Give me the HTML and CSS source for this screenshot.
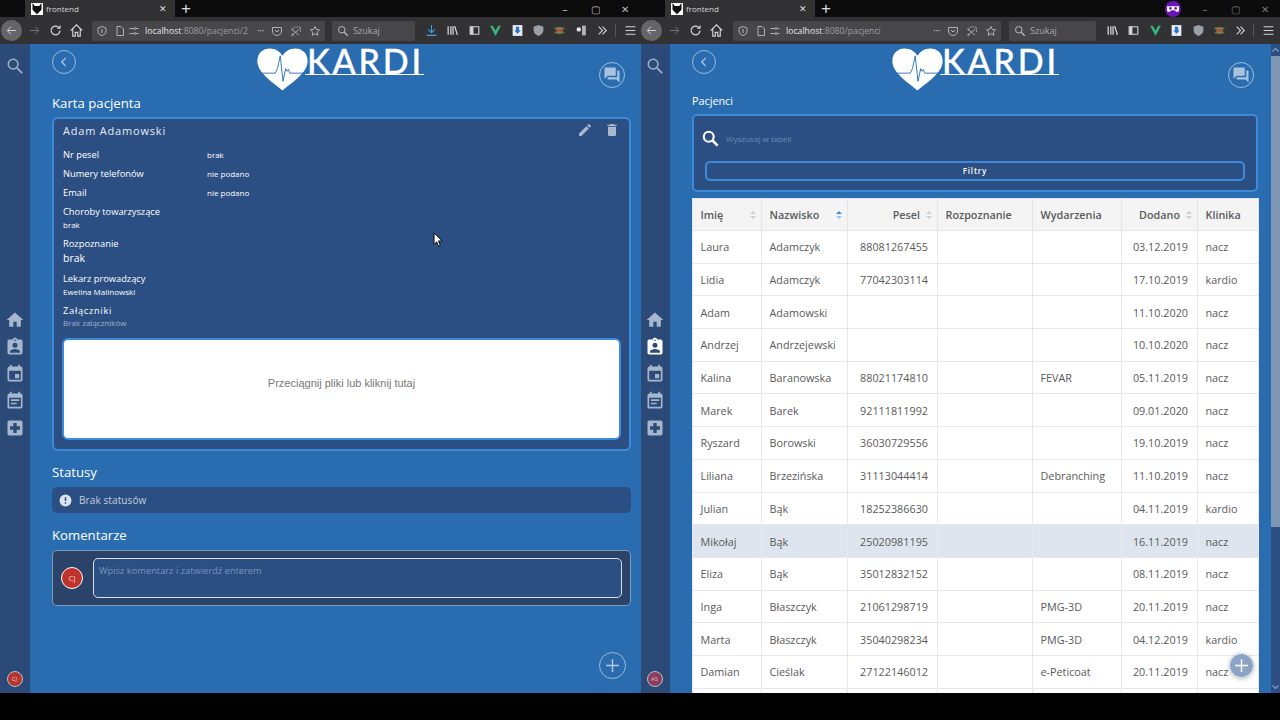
FILE: index.html
```html
<!DOCTYPE html>
<html lang="pl">

<head>
	<meta charset="utf-8">
	<meta name="viewport" content="width=device-width, initial-scale=1.0">
	<title>frontend</title>
	<link rel="stylesheet" href="styles.css">
</head>

<body>
	<svg class="defs" width="0" height="0">
		<symbol id="i-search" viewBox="0 0 24 24"><circle cx="9.5" cy="9.5" r="6.5" fill="none" stroke="currentColor" stroke-width="2"/><path d="M14.5 14.5l7 7" stroke="currentColor" stroke-width="2.4" fill="none"/></symbol>
		<symbol id="i-find" viewBox="0 0 24 24"><circle cx="9.5" cy="9.5" r="7" fill="none" stroke="currentColor" stroke-width="3"/><path d="M14.5 14.5l7.500 7.500" stroke="currentColor" stroke-width="3.600" fill="none"/></symbol>
		<symbol id="i-home" viewBox="0 0 24 24"><path fill="currentColor" d="M10 20v-6h4v6h5v-8h3L12 3 2 12h3v8z"/></symbol>
		<symbol id="i-badge" viewBox="0 0 24 24"><path fill="currentColor" d="M19 3h-4.200C14.400 1.800 13.300 1 12 1s-2.400.8-2.800 2H5a2 2 0 0 0-2 2v14a2 2 0 0 0 2 2h14a2 2 0 0 0 2-2V5a2 2 0 0 0-2-2zm-7 0a1 1 0 1 1 0 2 1 1 0 0 1 0-2zm0 4a3 3 0 1 1 0 6 3 3 0 0 1 0-6zm6 12H6v-1.400c0-2 4-3.100 6-3.100s6 1.100 6 3.100z"/></symbol>
		<symbol id="i-event" viewBox="0 0 24 24"><path fill="currentColor" d="M17 12h-5v5h5zM16 1v2H8V1H6v2H5a2 2 0 0 0-2 2v14a2 2 0 0 0 2 2h14a2 2 0 0 0 2-2V5a2 2 0 0 0-2-2h-1V1zm3 18H5V8h14z"/></symbol>
		<symbol id="i-note" viewBox="0 0 24 24"><path fill="currentColor" d="M17 10H7v2h10zm2-7h-1V1h-2v2H8V1H6v2H5a2 2 0 0 0-2 2v14a2 2 0 0 0 2 2h14a2 2 0 0 0 2-2V5a2 2 0 0 0-2-2zm0 16H5V8h14zm-5-5H7v2h7z"/></symbol>
		<symbol id="i-plus" viewBox="0 0 24 24"><path fill="currentColor" d="M19 3H5a2 2 0 0 0-2 2v14a2 2 0 0 0 2 2h14a2 2 0 0 0 2-2V5a2 2 0 0 0-2-2zm-1 11h-4v4h-4v-4H6v-4h4V6h4v4h4z"/></symbol>
		<symbol id="i-forum" viewBox="0 0 24 24"><path fill="currentColor" d="M21 6h-2v9H6v2c0 .6.4 1 1 1h11l4 4V7c0-.6-.4-1-1-1zm-4 6V3c0-.6-.4-1-1-1H3c-.6 0-1 .4-1 1v14l4-4h10c.6 0 1-.4 1-1z"/></symbol>
		<symbol id="i-heart" viewBox="0 0 56 46"><path fill="#fff" d="M28 46C20 39 2 28 .5 15.500-.5 6 6 0 14 0c6 0 11 3 14 8 3-5 8-8 14-8 8 0 14.500 6 13.500 15.500C54 28 36 39 28 46z"/><path fill="none" stroke="#2a6cb0" stroke-width="1" d="M1 27h19l2.500-5 3-14 3 28 3-14 1.500 3 1.500-2 1.500 4H55"/></symbol>
		<symbol id="i-back" viewBox="0 0 24 24"><path fill="none" stroke="currentColor" stroke-width="1.600" d="M19 12H6m5-6l-6 6 6 6"/></symbol>
		<symbol id="i-forward" viewBox="0 0 24 24"><path fill="none" stroke="currentColor" stroke-width="1.600" d="M5 12h13m-5-6l6 6-6 6"/></symbol>
		<symbol id="i-reload" viewBox="0 0 24 24"><path fill="none" stroke="currentColor" stroke-width="2" d="M19 12a7 7 0 1 1-2.500-5.400"/><path fill="currentColor" d="M20 3v6h-6z"/></symbol>
		<symbol id="i-house" viewBox="0 0 24 24"><path fill="none" stroke="currentColor" stroke-width="1.800" d="M3 12l9-9 9 9M6 10v11h4v-6h4v6h4V10"/></symbol>
		<symbol id="i-page" viewBox="0 0 24 24"><path fill="none" stroke="currentColor" stroke-width="1.800" d="M6 3h8l5 5v13H6z"/></symbol>
		<symbol id="i-sliders" viewBox="0 0 24 24"><path fill="none" stroke="currentColor" stroke-width="1.800" d="M3 7h9M3 17h9M16 7h5M16 17h5"/><circle cx="14" cy="7" r="2" fill="none" stroke="currentColor" stroke-width="1.500"/><circle cx="14" cy="17" r="2" fill="none" stroke="currentColor" stroke-width="1.500"/></symbol>
		<symbol id="i-shield" viewBox="0 0 24 24"><path fill="none" stroke="currentColor" stroke-width="1.800" d="M12 3l8 3v6c0 5-4 8-8 9-4-1-8-4-8-9V6z"/><path fill="currentColor" d="M11 8h2v8h-2z"/></symbol>
		<symbol id="i-pocket" viewBox="0 0 24 24"><path fill="none" stroke="currentColor" stroke-width="1.800" d="M3 5h18v7a9 9 0 0 1-18 0z"/><path fill="none" stroke="currentColor" stroke-width="2" d="M8 10l4 4 4-4"/></symbol>
		<symbol id="i-star" viewBox="0 0 24 24"><path fill="none" stroke="currentColor" stroke-width="1.800" d="M12 3l2.800 6 6.200.8-4.500 4.300 1.200 6.400L12 17.400l-5.700 3.100 1.200-6.400L3 9.800 9.200 9z"/></symbol>
		<symbol id="i-shot" viewBox="0 0 24 24"><path fill="none" stroke="currentColor" stroke-width="1.600" stroke-dasharray="3 2" d="M8 4h13v11"/><path fill="none" stroke="currentColor" stroke-width="1.600" d="M4 20L19 8M4 9l14 11"/><circle cx="5" cy="8" r="2" fill="none" stroke="currentColor"/><circle cx="5" cy="20" r="2" fill="none" stroke="currentColor"/></symbol>
		<symbol id="i-library" viewBox="0 0 24 24"><path fill="none" stroke="currentColor" stroke-width="2.400" d="M4 4v16M9 4v16M13 4v16M16 4l5 16"/></symbol>
		<symbol id="i-sidebar" viewBox="0 0 24 24"><path fill="none" stroke="currentColor" stroke-width="2" d="M4 5h16v14H4z"/><path fill="currentColor" d="M4 5h6v14H4z"/></symbol>
		<symbol id="i-more" viewBox="0 0 24 24"><path fill="none" stroke="currentColor" stroke-width="2" d="M5 5l7 7-7 7M12 5l7 7-7 7"/></symbol>
		<symbol id="i-menu" viewBox="0 0 24 24"><path fill="none" stroke="currentColor" stroke-width="2" d="M3 5h18M3 12h18M3 19h18"/></symbol>
		<symbol id="i-download" viewBox="0 0 24 24"><path fill="none" stroke="currentColor" stroke-width="2" d="M12 2v14m-6-6l6 6 6-6M3 21h18"/></symbol>
		<symbol id="i-vue" viewBox="0 0 24 24"><path fill="#35b37e" d="M2 3h5l5 9 5-9h5L12 22z"/></symbol>
		<symbol id="i-save" viewBox="0 0 24 24"><path fill="#e6ebf2" d="M3 2h18v20H3z"/><path fill="#2a74c8" d="M9 5h6v7h3l-6 6-6-6h3z"/></symbol>
		<symbol id="i-ublock" viewBox="0 0 24 24"><path fill="#98a1ab" d="M12 2l9 3v7c0 5-4 8-9 10-5-2-9-5-9-10V5z"/></symbol>
		<symbol id="i-bug" viewBox="0 0 24 24"><circle cx="12" cy="12" r="7" fill="#8c5a3c"/><circle cx="12" cy="12" r="3" fill="#c64a3d"/><path stroke="#5a9a50" stroke-width="2" d="M3 8h18M3 16h18"/></symbol>
		<symbol id="i-ext" viewBox="0 0 24 24"><circle cx="7" cy="10" r="4" fill="#e8e8e8"/><path fill="#b5b5b5" d="M13 3h7v18h-7z"/></symbol>
		<symbol id="i-mask" viewBox="0 0 24 24"><circle cx="12" cy="12" r="12" fill="#6a16b8"/><path fill="#fff" d="M3 8h18v6c0 3-5 3-6 0h-6c-1 3-6 3-6 0z"/><circle cx="8" cy="11" r="2" fill="#6a16b8"/><circle cx="16" cy="11" r="2" fill="#6a16b8"/></symbol>
		<symbol id="i-favicon" viewBox="0 0 16 16"><path fill="#fff" d="M0 0h16v16H0z"/><path fill="#111" d="M2 0l3 4h6l3-4v9l-6 6-6-6z"/></symbol>
		<symbol id="i-edit" viewBox="0 0 24 24"><path fill="currentColor" d="M3 17.200V21h3.800L17.800 9.900l-3.700-3.700zM20.700 7a1 1 0 0 0 0-1.400l-2.300-2.300a1 1 0 0 0-1.400 0l-1.800 1.800 3.700 3.700z"/></symbol>
		<symbol id="i-trash" viewBox="0 0 24 24"><path fill="currentColor" d="M6 19a2 2 0 0 0 2 2h8a2 2 0 0 0 2-2V7H6zM19 4h-3.500l-1-1h-5l-1 1H5v2h14z"/></symbol>
		<symbol id="i-alert" viewBox="0 0 24 24"><path fill="currentColor" d="M12 1a11 11 0 1 0 0 22 11 11 0 0 0 0-22zm1.500 17h-3v-3h3zm0-5h-3V6h3z"/></symbol>
		<symbol id="i-chev" viewBox="0 0 24 24"><path fill="none" stroke="currentColor" stroke-width="2" d="M15 5l-7 7 7 7"/></symbol>
		<symbol id="i-up" viewBox="0 0 24 24"><path fill="none" stroke="currentColor" stroke-width="3" d="M4 16l8-8 8 8"/></symbol>
		<symbol id="i-down" viewBox="0 0 24 24"><path fill="none" stroke="currentColor" stroke-width="3" d="M4 8l8 8 8-8"/></symbol>
		<symbol id="i-add" viewBox="0 0 24 24"><path fill="none" stroke="currentColor" stroke-width="2" d="M12 3v18M3 12h18"/></symbol>
		<symbol id="i-cursor" viewBox="0 0 12 18"><path fill="#fff" stroke="#000" stroke-width="1" d="M1 1v13l3-3 2 5 2-1-2-5h4z"/></symbol>
	</svg>

	<div class="screen">
		<section class="window">
			<div class="tabbar">
				<div class="tab"><svg class="favicon"><use href="#i-favicon"/></svg><span class="tab-title">frontend</span><span class="tab-close">✕</span></div>
				<span class="new-tab">+</span>
				<div class="win-controls"><span>–</span><span>▢</span><span>✕</span></div>
			</div>
			<div class="toolbar">
				<span class="back-btn"><svg class="ti"><use href="#i-back"/></svg></span>
				<svg class="ti dim"><use href="#i-forward"/></svg>
				<svg class="ti ml"><use href="#i-reload"/></svg>
				<svg class="ti ml"><use href="#i-house"/></svg>
				<div class="urlbar urlbar-l">
					<svg class="ti-s"><use href="#i-shield"/></svg>
					<svg class="ti-s sep"><use href="#i-page"/></svg>
					<svg class="ti-s sliders"><use href="#i-sliders"/></svg>
					<span class="url"><b>localhost</b>:8080/pacjenci/2</span>
					<span class="dots">•••</span>
					<svg class="ti-s"><use href="#i-pocket"/></svg>
					<svg class="ti-s"><use href="#i-shot"/></svg>
					<svg class="ti-s"><use href="#i-star"/></svg>
				</div>
				<div class="searchbar searchbar-l"><svg class="ti-s"><use href="#i-search"/></svg><span>Szukaj</span></div>
				<svg class="ext first blue"><use href="#i-download"/></svg>
				<svg class="ext"><use href="#i-library"/></svg>
				<svg class="ext"><use href="#i-sidebar"/></svg>
				<svg class="ext"><use href="#i-vue"/></svg>
				<svg class="ext"><use href="#i-save"/></svg>
				<svg class="ext"><use href="#i-ublock"/></svg>
				<svg class="ext"><use href="#i-bug"/></svg>
				<svg class="ext"><use href="#i-ext"/></svg>
				<svg class="ext"><use href="#i-more"/></svg>
				<svg class="ext menu"><use href="#i-menu"/></svg>
			</div>
			<div class="app">
				<aside class="sidebar">
					<svg class="side-search"><use href="#i-search"/></svg>
					<nav class="side-nav">
						<svg><use href="#i-home"/></svg>
						<svg><use href="#i-badge"/></svg>
						<svg><use href="#i-event"/></svg>
						<svg><use href="#i-note"/></svg>
						<svg><use href="#i-plus"/></svg>
					</nav>
					<span class="side-avatar cj">CJ</span>
				</aside>
				<main class="content card-page">
					<header class="top">
						<span class="round-btn"><svg><use href="#i-chev"/></svg></span>
						<div class="logo"><svg class="heart"><use href="#i-heart"/></svg><span class="logo-text">KARDI</span></div>
						<span class="round-btn big"><svg><use href="#i-forum"/></svg></span>
					</header>
					<h1 class="title">Karta pacjenta</h1>
					<div class="patient">
						<div class="patient-head">
							<h2>Adam Adamowski</h2>
							<svg><use href="#i-edit"/></svg>
							<svg><use href="#i-trash"/></svg>
						</div>
						<dl class="facts">
							<dt>Nr pesel</dt><dd>brak</dd>
							<dt>Numery telefonów</dt><dd>nie podano</dd>
							<dt>Email</dt><dd>nie podano</dd>
						</dl>
						<div class="block"><h3>Choroby towarzyszące</h3><p>brak</p></div>
						<div class="block"><h3>Rozpoznanie</h3><p class="large">brak</p></div>
						<div class="block"><h3>Lekarz prowadzący</h3><p>Ewelina Malinowski</p></div>
						<div class="block"><h3 class="spaced">Załączniki</h3><p class="muted">Brak załączników</p></div>
						<div class="dropzone">Przeciągnij pliki lub kliknij tutaj</div>
					</div>
					<h1 class="section">Statusy</h1>
					<div class="status"><svg><use href="#i-alert"/></svg><span>Brak statusów</span></div>
					<h1 class="section comments">Komentarze</h1>
					<div class="comment">
						<span class="avatar">CJ</span>
						<div class="comment-input">Wpisz komentarz i zatwierdź enterem</div>
					</div>
					<span class="fab"><svg><use href="#i-add"/></svg></span>
				</main>
			</div>
		</section>

		<section class="window second">
			<div class="tabbar">
				<div class="tab"><svg class="favicon"><use href="#i-favicon"/></svg><span class="tab-title">frontend</span><span class="tab-close">✕</span></div>
				<span class="new-tab">+</span>
				<svg class="mask"><use href="#i-mask"/></svg>
				<div class="win-controls tight"><span>–</span><span>▢</span><span>✕</span></div>
			</div>
			<div class="toolbar">
				<span class="back-btn"><svg class="ti"><use href="#i-back"/></svg></span>
				<svg class="ti dim"><use href="#i-forward"/></svg>
				<svg class="ti ml"><use href="#i-reload"/></svg>
				<svg class="ti ml"><use href="#i-house"/></svg>
				<div class="urlbar urlbar-r">
					<svg class="ti-s"><use href="#i-shield"/></svg>
					<svg class="ti-s sep"><use href="#i-page"/></svg>
					<svg class="ti-s sliders"><use href="#i-sliders"/></svg>
					<span class="url"><b>localhost</b>:8080/pacjenci</span>
					<span class="dots">•••</span>
					<svg class="ti-s"><use href="#i-pocket"/></svg>
					<svg class="ti-s"><use href="#i-shot"/></svg>
					<svg class="ti-s"><use href="#i-star"/></svg>
				</div>
				<div class="searchbar searchbar-r"><svg class="ti-s"><use href="#i-search"/></svg><span>Szukaj</span></div>
				<svg class="ext first"><use href="#i-library"/></svg>
				<svg class="ext"><use href="#i-sidebar"/></svg>
				<svg class="ext"><use href="#i-vue"/></svg>
				<svg class="ext"><use href="#i-save"/></svg>
				<svg class="ext"><use href="#i-ublock"/></svg>
				<svg class="ext"><use href="#i-bug"/></svg>
				<svg class="ext"><use href="#i-more"/></svg>
				<svg class="ext menu"><use href="#i-menu"/></svg>
			</div>
			<div class="app">
				<aside class="sidebar">
					<svg class="side-search"><use href="#i-search"/></svg>
					<nav class="side-nav">
						<svg><use href="#i-home"/></svg>
						<svg class="active"><use href="#i-badge"/></svg>
						<svg><use href="#i-event"/></svg>
						<svg><use href="#i-note"/></svg>
						<svg><use href="#i-plus"/></svg>
					</nav>
					<span class="side-avatar as">AS</span>
				</aside>
				<main class="content list-page">
					<header class="top">
						<span class="round-btn"><svg><use href="#i-chev"/></svg></span>
						<div class="logo"><svg class="heart"><use href="#i-heart"/></svg><span class="logo-text">KARDI</span></div>
						<span class="round-btn big"><svg><use href="#i-forum"/></svg></span>
					</header>
					<h1 class="title small">Pacjenci</h1>
					<div class="filters">
						<div class="find"><svg><use href="#i-find"/></svg><span>Wyszukaj w tabeli</span></div>
						<div class="filter-btn">Filtry</div>
					</div>
					<div class="table-wrap">
						<table class="patients">
							<thead>
								<tr>
									<th class="c1">Imię<i class="sort"></i></th>
									<th class="c2">Nazwisko<i class="sort on"></i></th>
									<th class="c3 num">Pesel<i class="sort"></i></th>
									<th class="c4">Rozpoznanie</th>
									<th class="c5">Wydarzenia</th>
									<th class="c6 num">Dodano<i class="sort"></i></th>
									<th class="c7">Klinika</th>
								</tr>
							</thead>
							<tbody>
								<tr><td>Laura</td><td>Adamczyk</td><td class="num">88081267455</td><td></td><td></td><td class="num">03.12.2019</td><td>nacz</td></tr>
								<tr><td>Lidia</td><td>Adamczyk</td><td class="num">77042303114</td><td></td><td></td><td class="num">17.10.2019</td><td>kardio</td></tr>
								<tr><td>Adam</td><td>Adamowski</td><td class="num"></td><td></td><td></td><td class="num">11.10.2020</td><td>nacz</td></tr>
								<tr><td>Andrzej</td><td>Andrzejewski</td><td class="num"></td><td></td><td></td><td class="num">10.10.2020</td><td>nacz</td></tr>
								<tr><td>Kalina</td><td>Baranowska</td><td class="num">88021174810</td><td></td><td>FEVAR</td><td class="num">05.11.2019</td><td>nacz</td></tr>
								<tr><td>Marek</td><td>Barek</td><td class="num">92111811992</td><td></td><td></td><td class="num">09.01.2020</td><td>nacz</td></tr>
								<tr><td>Ryszard</td><td>Borowski</td><td class="num">36030729556</td><td></td><td></td><td class="num">19.10.2019</td><td>nacz</td></tr>
								<tr><td>Liliana</td><td>Brzezińska</td><td class="num">31113044414</td><td></td><td>Debranching</td><td class="num">11.10.2019</td><td>nacz</td></tr>
								<tr><td>Julian</td><td>Bąk</td><td class="num">18252386630</td><td></td><td></td><td class="num">04.11.2019</td><td>kardio</td></tr>
								<tr class="hover"><td>Mikołaj</td><td>Bąk</td><td class="num">25020981195</td><td></td><td></td><td class="num">16.11.2019</td><td>nacz</td></tr>
								<tr><td>Eliza</td><td>Bąk</td><td class="num">35012832152</td><td></td><td></td><td class="num">08.11.2019</td><td>nacz</td></tr>
								<tr><td>Inga</td><td>Błaszczyk</td><td class="num">21061298719</td><td></td><td>PMG-3D</td><td class="num">20.11.2019</td><td>nacz</td></tr>
								<tr><td>Marta</td><td>Błaszczyk</td><td class="num">35040298234</td><td></td><td>PMG-3D</td><td class="num">04.12.2019</td><td>kardio</td></tr>
								<tr><td>Damian</td><td>Cieślak</td><td class="num">27122146012</td><td></td><td>e-Peticoat</td><td class="num">20.11.2019</td><td>nacz</td></tr>
								<tr><td></td><td></td><td></td><td></td><td></td><td></td><td></td></tr>
							</tbody>
						</table>
					</div>
					<span class="fab solid"><svg><use href="#i-add"/></svg></span>
				</main>
				<div class="scrollbar">
					<svg class="arrow"><use href="#i-up"/></svg>
					<i class="thumb"></i>
					<svg class="arrow end"><use href="#i-down"/></svg>
				</div>
			</div>
		</section>
		<svg class="cursor"><use href="#i-cursor"/></svg>
	</div>
	<div class="bottom"></div>
</body>

</html>
```

FILE: styles.css
```css
* {
	box-sizing: border-box;
}

html, body {
	height: 100%;
}

body {
	background-color: #000;
	font-family: 'Open Sans', sans-serif;
	margin: 0;
	overflow: hidden;
}

.defs {
	display: block;
	height: 0;
	position: absolute;
}

.screen {
	display: flex;
	height: 693px;
	position: relative;
}

.window {
	display: flex;
	flex-direction: column;
	height: 693px;
	overflow: hidden;
	width: 640px;
}

.cursor {
	height: 16px;
	left: 433px;
	position: absolute;
	top: 232px;
	width: 11px;
}

/* browser chrome */
.tabbar {
	align-items: center;
	background-color: #0c0c0d;
	display: flex;
	flex: none;
	height: 17px;
	padding-left: 25px;
}
.tab {
	align-items: center;
	background-color: #323234;
	color: #d8d8d8;
	display: flex;
	font-size: 8px;
	height: 17px;
	padding: 0 8px 0 6px;
	width: 150px;
}
.favicon {
	height: 12px;
	width: 12px;
}
.tab-title {
	flex: 1;
	margin-left: 3px;
}
.tab-close {
	color: #ddd;
	font-size: 9px;
}
.new-tab {
	color: #ddd;
	font-family: 'Liberation Sans', sans-serif;
	font-size: 17px;
	margin-left: 6px;
}
.mask {
	height: 16px;
	margin-left: auto;
	width: 16px;
}
.win-controls {
	color: #bbb;
	display: flex;
	font-size: 10px;
	margin-left: auto;
}
.win-controls span {
	text-align: center;
	width: 30px;
}
.win-controls.tight {
	color: #777;
	margin-left: 9px;
}
.toolbar {
	align-items: center;
	background-color: #323234;
	color: #d4d4d6;
	display: flex;
	flex: none;
	height: 27px;
	padding-left: 1px;
}
.back-btn {
	align-items: center;
	background-color: #66666a;
	border-radius: 50%;
	display: flex;
	flex: none;
	height: 21px;
	justify-content: center;
	width: 21px;
}
.ti {
	flex: none;
	height: 15px;
	width: 15px;
}
.dim {
	color: #77777a;
	margin-left: 5px;
}
.ml {
	margin-left: 6px;
}
.ti-s {
	flex: none;
	height: 12px;
	width: 12px;
}
.urlbar, .searchbar {
	align-items: center;
	background-color: #47474a;
	border-radius: 2px;
	color: #bdbdc0;
	display: flex;
	flex: none;
	height: 20px;
}
.urlbar {
	gap: 7px;
	padding: 0 4px;
}
.urlbar-l {
	margin-left: 8px;
	width: 233px;
}
.urlbar-r {
	margin-left: 9px;
	width: 268px;
}
.sep {
	margin-left: -1px;
}
.urlbar .sliders {
	margin-left: -5px;
}
.url {
	color: #9c9ca0;
	flex: 1;
	font-size: 8.700px;
	margin-left: -2px;
	overflow: hidden;
	white-space: nowrap;
}
.url b {
	color: #e6e6e8;
	font-weight: 400;
}
.dots {
	flex: none;
	font-size: 6px;
}
.searchbar {
	gap: 4px;
	padding-left: 5px;
}
.searchbar span {
	color: #a9a9ac;
	font-size: 9px;
}
.searchbar-l {
	margin-left: 7px;
	width: 83px;
}
.searchbar-r {
	margin-left: 8px;
	width: 87px;
}
.ext {
	flex: none;
	height: 13px;
	margin-left: 8.400px;
	width: 13px;
}
.ext.first {
	margin-left: 10px;
}
.blue {
	color: #3f9fe8;
}
.ext.menu {
	border-left: 1px solid #555;
	box-sizing: content-box;
	margin-left: 6px;
	padding-left: 8px;
}

/* app */
.app {
	display: flex;
	flex: 1;
	min-height: 0;
}
.sidebar {
	background-color: #2b4a78;
	color: #a6b6cf;
	display: flex;
	flex: none;
	flex-direction: column;
	padding-right: 1px;
	width: 30px;
}
.second .sidebar {
	border-left: 1px solid #2a6cb0;
	padding-right: 2px;
}
.side-search {
	align-self: center;
	color: #9fb0c9;
	height: 18px;
	margin-top: 13px;
	width: 18px;
}
.side-nav {
	align-items: center;
	display: flex;
	flex-direction: column;
	gap: 7px;
	margin-top: 235px;
}
.side-nav svg {
	height: 20px;
	width: 20px;
}
.side-nav .active {
	color: #fff;
}
.side-avatar {
	align-self: center;
	border: 1px solid #b5bfcc;
	border-radius: 50%;
	font-size: 6px;
	height: 16px;
	line-height: 14px;
	margin-top: auto;
	margin-bottom: 6px;
	text-align: center;
	width: 16px;
}
.side-avatar.cj {
	background-color: #b5352f;
	color: #f4c9c5;
}
.side-avatar.as {
	background-color: #8a3d5c;
	color: #e0b8c8;
}
.content {
	background-color: #2a6cb0;
	color: #fff;
	flex: 1;
	min-width: 0;
	position: relative;
}
.card-page {
	padding: 0 9px 0 22px;
}
.list-page {
	padding: 0 13px 0 22px;
}
.top {
	align-items: flex-start;
	display: flex;
	height: 47px;
	justify-content: space-between;
	position: relative;
}
.round-btn {
	align-items: center;
	border: 1px solid #9dbcdc;
	border-radius: 50%;
	color: #b4cce4;
	display: flex;
	height: 24px;
	justify-content: center;
	margin-top: 6px;
	width: 24px;
}
.round-btn svg {
	height: 14px;
	width: 14px;
}
.round-btn.big {
	height: 26px;
	margin-right: 6px;
	margin-top: 18px;
	width: 26px;
}
.list-page .round-btn.big {
	margin-right: 4px;
}
.round-btn.big svg {
	color: #a9c4df;
	height: 18px;
	width: 18px;
}
.logo {
	align-items: flex-start;
	display: flex;
	left: 205px;
	position: absolute;
	top: 4px;
}
.logo::after {
	background-color: #fff;
	content: "";
	height: 1px;
	left: 48px;
	position: absolute;
	right: 0;
	top: 26px;
}
.list-page .logo {
	left: 200px;
}
.heart {
	flex: none;
	height: 43px;
	width: 51px;
}
.logo-text {
	font-family: 'Lato', sans-serif;
	font-size: 34px;
	font-weight: 500;
	letter-spacing: 2.800px;
	line-height: 40px;
	margin-left: -1px;
	margin-top: -7px;
	white-space: nowrap;
	-webkit-text-stroke: 0.300px #fff;
}
.title {
	font-size: 13.200px;
	font-weight: 400;
	line-height: 20px;
	margin: 2px 0 4px;
}
.title.small {
	font-size: 10.800px;
	line-height: 16px;
	margin: 2px 0 5px;
}

/* patient card */
.patient {
	background-color: #2b4f82;
	border: 2px solid #3d8ad8;
	border-radius: 6px;
	height: 334px;
	padding: 3px 9px;
}
.patient-head {
	align-items: center;
	color: #a9b8cf;
	display: flex;
	gap: 11px;
}
.patient-head h2 {
	color: #e6ecf4;
	flex: 1;
	font-size: 11px;
	font-weight: 400;
	letter-spacing: 0.800px;
	margin: 0;
}
.patient-head svg {
	height: 16px;
	margin-right: 0;
	width: 16px;
}
.facts {
	display: grid;
	grid-template-columns: 144px 1fr;
	margin: 10px 0 2px;
	row-gap: 6px;
}
.facts dt {
	font-size: 9.300px;
	line-height: 13px;
}
.facts dd {
	font-size: 8px;
	line-height: 13px;
	margin: 0;
}
.block {
	margin-top: 6px;
}
.block h3 {
	font-size: 9.300px;
	font-weight: 400;
	line-height: 13px;
	margin: 0;
}
.block h3.spaced {
	letter-spacing: 0.700px;
}
.block p {
	font-size: 8px;
	line-height: 13px;
	margin: 0;
}
.block p.large {
	font-size: 10.500px;
	line-height: 16px;
}
.block p.muted {
	color: #9fb0c9;
	line-height: 12px;
}
.dropzone {
	align-items: center;
	background-color: #fff;
	border: 2px solid #3d8ad8;
	border-radius: 6px;
	color: #777;
	display: flex;
	font-family: 'Liberation Sans', sans-serif;
	font-size: 11px;
	height: 102px;
	justify-content: center;
	margin: 9px -1px 0 -1px;
	padding-bottom: 12px;
}
.section {
	font-size: 13.200px;
	font-weight: 400;
	line-height: 20px;
	margin: 11px 0 5px;
}
.section.comments {
	margin-top: 12px;
}
.status {
	align-items: center;
	background-color: #2b4f82;
	border-radius: 5px;
	color: #c2cede;
	display: flex;
	font-size: 10px;
	gap: 7px;
	height: 26px;
	letter-spacing: 0.100px;
	padding-left: 7px;
}
.status svg {
	color: #dfe5ee;
	height: 13px;
	width: 13px;
}
.comment {
	align-items: center;
	background-color: #2b4368;
	border: 1px solid #7c9cc0;
	border-radius: 5px;
	display: flex;
	gap: 10px;
	height: 56px;
	padding: 0 8px;
}
.avatar {
	background-color: #c0322c;
	border: 1px solid #fff;
	border-radius: 50%;
	color: #f5d0cc;
	flex: none;
	font-size: 8px;
	height: 22px;
	line-height: 20px;
	text-align: center;
	width: 22px;
}
.comment-input {
	background-color: #2b4f82;
	border: 1px solid #d5dfec;
	border-radius: 5px;
	color: #7d94b8;
	flex: 1;
	font-size: 9.300px;
	height: 40px;
	padding: 5px 5px;
}
.fab {
	align-items: center;
	border: 1px solid #9dbcdc;
	border-radius: 50%;
	bottom: 14px;
	color: #b4cce4;
	display: flex;
	height: 27px;
	justify-content: center;
	position: absolute;
	right: 14px;
	width: 27px;
}
.fab svg {
	height: 17px;
	width: 17px;
}
.fab.solid {
	background-color: #8ba3c4;
	border-color: #dfe6ef;
	bottom: 15px;
	box-shadow: 0 1px 4px rgba(0, 0, 0, .25);
	color: #fff;
	height: 25px;
	right: 17px;
	width: 25px;
}

/* patient list */
.filters {
	background-color: #2b4f82;
	border: 2px solid #3d8ad8;
	border-radius: 5px;
	height: 78px;
	padding: 0 11px;
}
.find {
	align-items: center;
	color: #fff;
	display: flex;
	gap: 7px;
	height: 45px;
	padding-bottom: 1px;
}
.find svg {
	height: 17px;
	margin-left: -3px;
	width: 17px;
}
.find span {
	color: #6f8aae;
	font-size: 8px;
}
.filter-btn {
	border: 2px solid #3d8ad8;
	border-radius: 5px;
	font-size: 8px;
	font-weight: 600;
	height: 20px;
	letter-spacing: 0.800px;
	line-height: 16px;
	text-align: center;
}
.table-wrap {
	margin-top: 6px;
}
.patients {
	background-color: #fff;
	border-collapse: collapse;
	color: #5a5a5a;
	font-size: 10.800px;
	table-layout: fixed;
	width: 566px;
}
.patients th {
	background-color: #f4f4f5;
	border: 1px solid #e4e4e6;
	font-weight: 600;
	height: 32px;
	padding: 0 8px 0 7.500px;
	position: relative;
	text-align: left;
}
.patients td {
	border: 1px solid #e8e8ea;
	height: 32.700px;
	padding: 0 9px 0 7.500px;
}
.patients .num {
	text-align: right;
}
.patients th.num {
	padding-right: 17px;
}
.patients .hover td {
	background-color: #dfe5ee;
}
.c1 { width: 69px; }
.c2 { width: 86px; }
.c3 { width: 90px; }
.c4 { width: 95px; }
.c5 { width: 89px; }
.c6 { width: 76px; }
.c7 { width: 61px; }
.sort {
	border-left: 3px solid transparent;
	border-right: 3px solid transparent;
	border-bottom: 3px solid #cfcfd2;
	height: 0;
	position: absolute;
	right: 5px;
	top: 12px;
	width: 0;
}
.sort::after {
	border-left: 3px solid transparent;
	border-right: 3px solid transparent;
	border-top: 3px solid #cfcfd2;
	content: "";
	height: 0;
	left: -3px;
	position: absolute;
	top: 5px;
	width: 0;
}
.sort.on {
	border-bottom-color: #3d8ad8;
}
.sort.on::after {
	border-top-color: #9cc3ea;
}
.scrollbar {
	background-color: #2b4f82;
	color: #8ba3c4;
	display: flex;
	flex: none;
	flex-direction: column;
	width: 9px;
}
.arrow {
	flex: none;
	height: 12px;
	width: 9px;
}
.arrow.end {
	margin-top: auto;
}
.thumb {
	background-color: #7f97b5;
	display: block;
	flex: none;
	height: 471px;
}
.bottom {
	background-color: #000;
	height: 27px;
}
```
